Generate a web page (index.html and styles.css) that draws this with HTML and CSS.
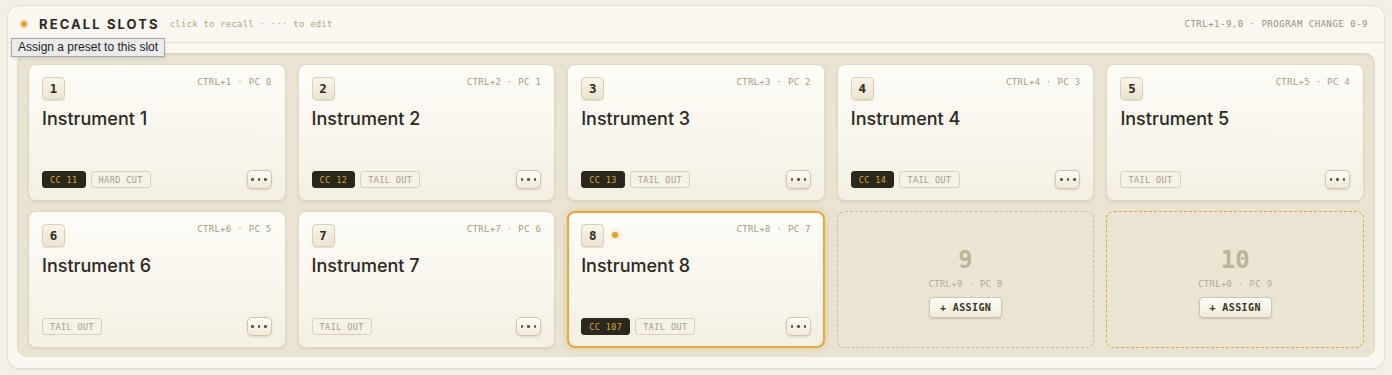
FILE: index.html
```html
<!DOCTYPE html>
<html lang="en">
<head>
  <meta charset="UTF-8">
  <meta name="viewport" content="width=device-width, initial-scale=1.0">
  <title>Recall Slots</title>
  <link rel="stylesheet" href="styles.css">
</head>
<body>

  <div class="panel">
    <div class="panel-head">
      <span class="live-dot"></span>
      <h2>Recall Slots</h2>
      <span class="hint">click to recall · ··· to edit</span>
      <span class="keys">CTRL+1-9,0 · PROGRAM CHANGE 0-9</span>
    </div>

    <div class="well">
      <div class="slots">

        <div class="slot">
          <div class="slot-top">
            <span class="num">1</span>
            <span class="keymap">CTRL+1 · PC 0</span>
          </div>
          <div class="name">Instrument 1</div>
          <div class="slot-foot">
            <span class="chip cc">CC 11</span>
            <span class="chip">HARD CUT</span>
            <button class="more"><i></i><i></i><i></i></button>
          </div>
        </div>

        <div class="slot">
          <div class="slot-top">
            <span class="num">2</span>
            <span class="keymap">CTRL+2 · PC 1</span>
          </div>
          <div class="name">Instrument 2</div>
          <div class="slot-foot">
            <span class="chip cc">CC 12</span>
            <span class="chip">TAIL OUT</span>
            <button class="more"><i></i><i></i><i></i></button>
          </div>
        </div>

        <div class="slot">
          <div class="slot-top">
            <span class="num">3</span>
            <span class="keymap">CTRL+3 · PC 2</span>
          </div>
          <div class="name">Instrument 3</div>
          <div class="slot-foot">
            <span class="chip cc">CC 13</span>
            <span class="chip">TAIL OUT</span>
            <button class="more"><i></i><i></i><i></i></button>
          </div>
        </div>

        <div class="slot">
          <div class="slot-top">
            <span class="num">4</span>
            <span class="keymap">CTRL+4 · PC 3</span>
          </div>
          <div class="name">Instrument 4</div>
          <div class="slot-foot">
            <span class="chip cc">CC 14</span>
            <span class="chip">TAIL OUT</span>
            <button class="more"><i></i><i></i><i></i></button>
          </div>
        </div>

        <div class="slot">
          <div class="slot-top">
            <span class="num">5</span>
            <span class="keymap">CTRL+5 · PC 4</span>
          </div>
          <div class="name">Instrument 5</div>
          <div class="slot-foot">
            <span class="chip">TAIL OUT</span>
            <button class="more"><i></i><i></i><i></i></button>
          </div>
        </div>

        <div class="slot">
          <div class="slot-top">
            <span class="num">6</span>
            <span class="keymap">CTRL+6 · PC 5</span>
          </div>
          <div class="name">Instrument 6</div>
          <div class="slot-foot">
            <span class="chip">TAIL OUT</span>
            <button class="more"><i></i><i></i><i></i></button>
          </div>
        </div>

        <div class="slot">
          <div class="slot-top">
            <span class="num">7</span>
            <span class="keymap">CTRL+7 · PC 6</span>
          </div>
          <div class="name">Instrument 7</div>
          <div class="slot-foot">
            <span class="chip">TAIL OUT</span>
            <button class="more"><i></i><i></i><i></i></button>
          </div>
        </div>

        <div class="slot active">
          <div class="slot-top">
            <span class="num">8</span>
            <span class="playing"></span>
            <span class="keymap">CTRL+8 · PC 7</span>
          </div>
          <div class="name">Instrument 8</div>
          <div class="slot-foot">
            <span class="chip cc">CC 107</span>
            <span class="chip">TAIL OUT</span>
            <button class="more"><i></i><i></i><i></i></button>
          </div>
        </div>

        <div class="slot empty">
          <div class="empty-num">9</div>
          <div class="keymap">CTRL+9 · PC 8</div>
          <button class="assign">+ ASSIGN</button>
        </div>

        <div class="slot empty focus">
          <div class="empty-num">10</div>
          <div class="keymap">CTRL+0 · PC 9</div>
          <button class="assign">+ ASSIGN</button>
        </div>

      </div>
    </div>
  </div>

  <div class="tooltip">Assign a preset to this slot</div>

</body>
</html>
```

FILE: styles.css
```css
body {
  margin: 0;
  padding: 5px 7px 6px;
  background-color: #f2efe7;
  font-family: Inter, "Noto Sans", sans-serif;
  color: #2b2822;
}

.panel {
  height: 362px;
  background: #f9f7f0;
  border: 1px solid #e2dccb;
  border-radius: 12px;
  box-shadow: 0 1px 2px rgba(120, 105, 70, 0.08);
  display: flex;
  flex-direction: column;
}

.panel-head {
  height: 36px;
  display: flex;
  align-items: center;
  padding: 0 16px 0 13px;
  border-bottom: 1px solid #e4dcc6;
}

.live-dot {
  width: 6px;
  height: 6px;
  border-radius: 50%;
  background: #e0a030;
  box-shadow: 0 0 4px rgba(224, 160, 48, 0.6);
  margin-right: 12px;
}

.panel-head h2 {
  margin: 0;
  font-size: 13px;
  font-weight: 700;
  letter-spacing: 2.1px;
  text-transform: uppercase;
  color: #2a261f;
}

.hint {
  margin-left: 10px;
  font-family: "DejaVu Sans Mono", monospace;
  font-size: 9px;
  letter-spacing: 0.2px;
  color: #b3a682;
}

.keys {
  margin-left: auto;
  font-family: "DejaVu Sans Mono", monospace;
  font-size: 9px;
  letter-spacing: 0.5px;
  color: #9a917c;
}

.well {
  margin: 10px 9px 11px;
  flex: 1;
  background: #e9e3d1;
  border-radius: 10px;
  box-shadow: inset 0 1px 3px rgba(120, 100, 60, 0.18);
}

.slots {
  display: grid;
  grid-template-columns: repeat(5, 1fr);
  grid-template-rows: 137px 137px;
  gap: 10px 12px;
  padding: 11px 11px 9px;
}

.slot {
  display: flex;
  flex-direction: column;
  padding: 12px 13px 11px;
  border: 1px solid #e0d8c2;
  border-radius: 8px;
  background: linear-gradient(180deg, #fdfcf7 0%, #f3efe2 100%);
  box-shadow: 0 1px 2px rgba(110, 95, 60, 0.18);
}

.slot-top {
  display: flex;
  align-items: flex-start;
}

.num {
  width: 21px;
  height: 21px;
  display: flex;
  align-items: center;
  justify-content: center;
  border: 1px solid #d8cfb5;
  border-radius: 4px;
  background: linear-gradient(180deg, #f8f4e8 0%, #ebe4d0 100%);
  box-shadow: 0 1px 1px rgba(110, 95, 60, 0.15);
  font-family: "DejaVu Sans Mono", monospace;
  font-size: 12.5px;
  font-weight: 700;
  color: #2f2a20;
}

.playing {
  width: 6px;
  height: 6px;
  margin: 8px 0 0 8px;
  border-radius: 50%;
  background: #e0a030;
  box-shadow: 0 0 5px rgba(224, 160, 48, 0.7);
}

.keymap {
  margin-left: auto;
  font-family: "DejaVu Sans Mono", monospace;
  font-size: 9px;
  letter-spacing: 0.3px;
  color: #a59c86;
}

.name {
  margin-top: 8px;
  font-size: 18px;
  line-height: 22px;
  font-weight: 500;
  color: #2b2822;
}

.slot-foot {
  margin-top: auto;
  display: flex;
  align-items: center;
  gap: 5px;
}

.chip {
  height: 15px;
  padding: 0 7px;
  display: flex;
  align-items: center;
  border: 1px solid #d8cfb8;
  border-radius: 3px;
  font-family: "DejaVu Sans Mono", monospace;
  font-size: 8.5px;
  letter-spacing: 0.4px;
  color: #a79e88;
}

.chip.cc {
  background: #2c271d;
  border-color: #2c271d;
  color: #d9a63a;
}

.more {
  margin-left: auto;
  width: 25px;
  height: 19px;
  padding: 0;
  display: flex;
  align-items: center;
  justify-content: center;
  gap: 4px;
  border: 1px solid #cfc5aa;
  border-radius: 5px;
  background: linear-gradient(180deg, #fefdf9 0%, #eee8d7 100%);
  box-shadow: 0 1px 2px rgba(110, 95, 60, 0.2);
  cursor: pointer;
}

.more i {
  width: 2.5px;
  height: 2.5px;
  border-radius: 50%;
  background: #5a5140;
}

.slot.active {
  padding: 11px 12px 10px;
  border: 2px solid #e2a93e;
  box-shadow: 0 0 6px rgba(224, 165, 55, 0.45);
}

.slot.empty {
  align-items: center;
  justify-content: center;
  padding-top: 16px;
  background: #ebe5d4;
  border: 1px dashed #c6bc9f;
  box-shadow: none;
}

.slot.empty.focus {
  border-color: #e0a33a;
}

.empty-num {
  font-family: "DejaVu Sans Mono", monospace;
  font-size: 24px;
  font-weight: 700;
  line-height: 28px;
  color: #bdb396;
}

.slot.empty .keymap {
  margin: 5px 0 0;
  color: #b3aa91;
}

.assign {
  margin-top: 8px;
  width: 73px;
  height: 21px;
  padding: 0;
  border: 1px solid #cfc5aa;
  border-radius: 4px;
  background: linear-gradient(180deg, #fefdf9 0%, #efe9d8 100%);
  box-shadow: 0 1px 2px rgba(110, 95, 60, 0.25);
  font-family: "DejaVu Sans Mono", monospace;
  font-size: 10px;
  font-weight: 700;
  letter-spacing: 0.4px;
  color: #3a3428;
  cursor: pointer;
}

.tooltip {
  position: absolute;
  left: 11px;
  top: 38px;
  padding: 2px 6px;
  background: #ebebec;
  border: 1px solid #a9a9a9;
  box-shadow: 0 1px 3px rgba(0, 0, 0, 0.15);
  font-family: "Liberation Sans", Arial, sans-serif;
  font-size: 12px;
  line-height: 13px;
  color: #222;
}
```
